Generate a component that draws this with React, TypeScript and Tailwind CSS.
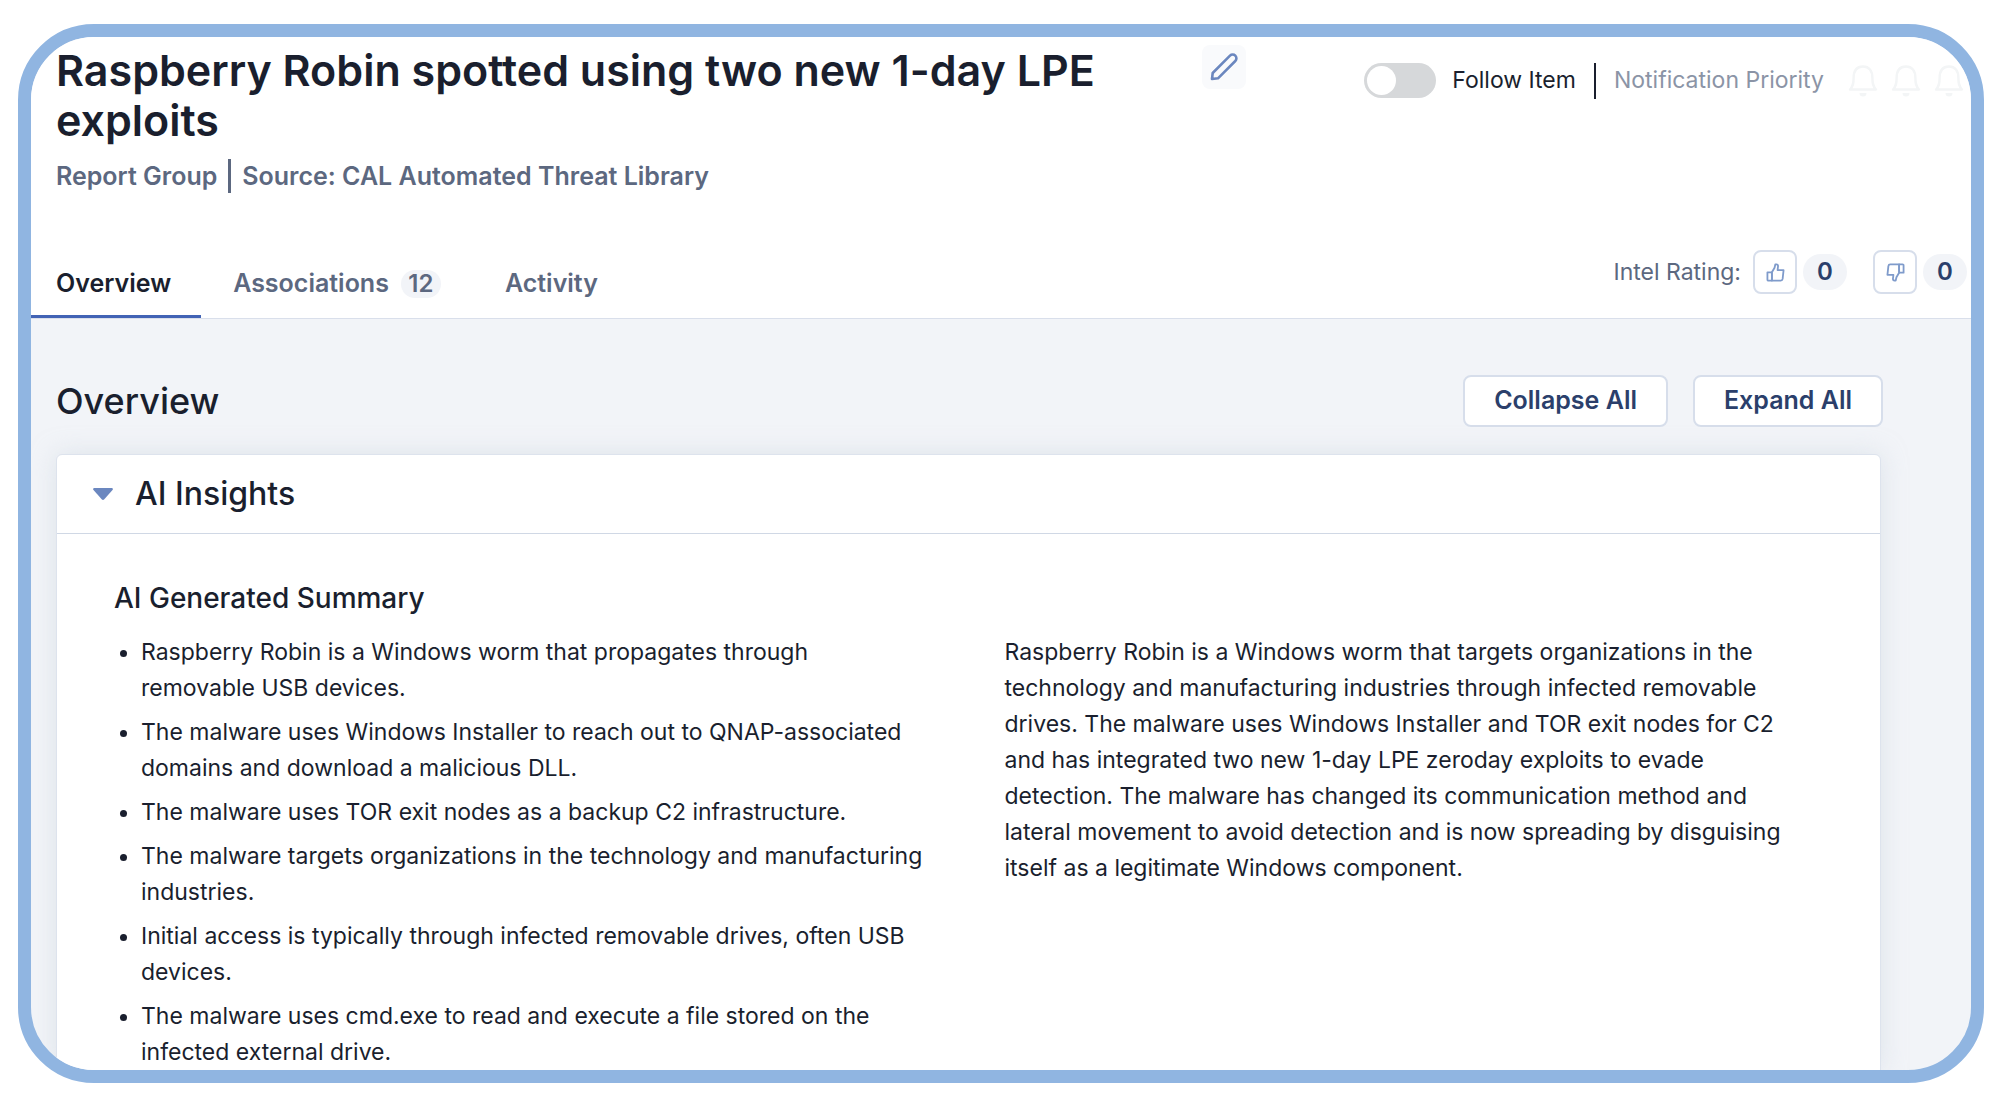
import { useState } from "react";

const TABS = [
  { id: "overview", label: "Overview" },
  { id: "associations", label: "Associations", count: 12 },
  { id: "activity", label: "Activity" },
];

const SUMMARY_POINTS = [
  "Raspberry Robin is a Windows worm that propagates through removable USB devices.",
  "The malware uses Windows Installer to reach out to QNAP-associated domains and download a malicious DLL.",
  "The malware uses TOR exit nodes as a backup C2 infrastructure.",
  "The malware targets organizations in the technology and manufacturing industries.",
  "Initial access is typically through infected removable drives, often USB devices.",
  "The malware uses cmd.exe to read and execute a file stored on the infected external drive.",
];

const PRIORITIES = ["Low", "Medium", "High"];

const PencilIcon = () => (
  <svg
    className="size-8"
    fill="none"
    stroke="currentColor"
    strokeLinejoin="round"
    strokeWidth="2.6"
    viewBox="0 0 32 32"
  >
    <path d="M4 28l.7-6L22 4.700a3.700 3.700 0 0 1 5.300 5.300L10 27.300z" />
  </svg>
);

const BellIcon = () => (
  <svg className="h-[34px] w-[30px]" fill="none" viewBox="0 0 30 34">
    <path
      d="M2 25.500c3.200-3.400 3.600-6 3.600-11.500C5.600 6.500 9 2.500 15 2.500S24.400 6.500 24.400 14c0 5.500.4 8.100 3.600 11.500z"
      stroke="currentColor"
      strokeLinejoin="round"
      strokeWidth="2.4"
    />
    <path d="M11.500 29h7a3.500 3.500 0 0 1-7 0z" fill="currentColor" />
  </svg>
);

const ThumbIcon = ({ down = false }: { down?: boolean }) => (
  <svg
    className={down ? "size-[19px] rotate-180" : "size-[19px]"}
    fill="none"
    stroke="currentColor"
    strokeLinejoin="round"
    strokeWidth="1.900"
    viewBox="0 0 20 20"
  >
    <path d="M1.500 9.800h4.700v8.700H2.500a1 1 0 0 1-1-1z" />
    <path d="M6.200 9.800l2.800-4.800.8-3.500h1.200c1 0 1.700.8 1.700 1.800l-.5 4.300h6.300l-1 9.200a2 2 0 0 1-2 1.700H6.200z" />
  </svg>
);

const RatingButton = ({
  label,
  count,
  down,
}: {
  label: string;
  count: number;
  down?: boolean;
}) => (
  <div className="flex items-center gap-1.5">
    <button
      aria-label={label}
      className="flex size-11 items-center justify-center rounded-lg border-2 border-[#d7deeb] bg-white text-[#7f9bcb]"
      type="button"
    >
      <ThumbIcon down={down} />
    </button>
    <span className="flex h-9 w-11 items-center justify-center rounded-full bg-[#f2f4f8] font-semibold text-[#2b3f6b] text-[24px]">
      {count}
    </span>
  </div>
);

export default function App() {
  const [tab, setTab] = useState("overview");
  const [open, setOpen] = useState(true);

  return (
    <div className="h-screen bg-white pt-6 pr-4 pb-[23px] pl-[18px] font-[Inter,sans-serif] text-[#1a1f2e]">
      <div className="flex h-full flex-col overflow-hidden rounded-[76px] border-[#90b5e1] border-[13px] bg-[#f2f4f8]">
        <header className="shrink-0 border-[#d9dfeb] border-b bg-white">
          <div className="flex items-start pt-2 pr-[7px] pl-[25px]">
            <div className="flex-1">
              <h1 className="font-semibold text-[43px] leading-[50px]">
                Raspberry Robin spotted using two new 1-day LPE exploits
              </h1>
              <p className="mt-2 flex items-center gap-[11px] font-semibold text-[#5c6880] text-[25px] leading-[46px]">
                <span>Report Group</span>
                <span className="h-[34px] w-[3px] bg-[#5c6880]" />
                <span>Source: CAL Automated Threat Library</span>
              </p>
            </div>
            <button
              aria-label="Edit title"
              className="flex size-11 items-center justify-center rounded-lg bg-[#f9fafc] text-[#6b87bf]"
              type="button"
            >
              <PencilIcon />
            </button>
            <div className="ml-[118px] flex h-[71px] items-center text-[23px]">
              <label className="flex items-center gap-4">
                <input
                  className="flex h-[35px] w-[72px] appearance-none items-center rounded-full bg-[#d6d8da] px-[3px] before:size-[29px] before:rounded-full before:bg-white checked:justify-end checked:bg-[#4263b5]"
                  type="checkbox"
                />
                Follow Item
              </label>
              <span className="mx-[18px] h-9 w-[2px] bg-[#1a1f2e]" />
              <span className="text-[#8b94a6]">Notification Priority</span>
              <div className="ml-6 flex gap-[13px]">
                {PRIORITIES.map((p) => (
                  <button
                    aria-label={p}
                    className="text-[#f3f5f6]"
                    key={p}
                    type="button"
                  >
                    <BellIcon />
                  </button>
                ))}
              </div>
            </div>
          </div>

          <div className="mt-[35px] flex items-start justify-between pr-1">
            <nav className="flex">
              {TABS.map((t) => (
                <button
                  className={
                    t.id === tab
                      ? "flex h-[84px] items-center gap-3 border-[#4263b5] border-b-[3px] pt-[18px] pr-[30px] pl-[25px] font-semibold text-[25px]"
                      : "flex h-[84px] items-center gap-3 border-transparent border-b-[3px] px-8 pt-[18px] font-semibold text-[#5c6880] text-[25px]"
                  }
                  key={t.id}
                  onClick={() => setTab(t.id)}
                  type="button"
                >
                  {t.label}
                  {t.count && (
                    <span className="flex h-7 w-10 items-center justify-center rounded-full bg-[#f2f4f8] text-[24px]">
                      {t.count}
                    </span>
                  )}
                </button>
              ))}
            </nav>
            <div className="flex items-center gap-[26px] pt-4">
              <div className="flex items-center gap-3">
                <span className="text-[#5c6880] text-[23px]">
                  Intel Rating:
                </span>
                <RatingButton count={0} label="Thumbs up" />
              </div>
              <RatingButton count={0} down label="Thumbs down" />
            </div>
          </div>
        </header>

        <main className="flex min-h-0 flex-1 flex-col pt-14 pr-[88px] pl-[25px]">
          <div className="flex items-center justify-between">
            <h2 className="font-medium text-[36px] leading-[52px]">Overview</h2>
            <div className="flex gap-[25px]">
              <button
                className="h-[52px] rounded-lg border-2 border-[#d7deeb] bg-white px-[29px] font-semibold text-[#2b3f6b] text-[25px]"
                onClick={() => setOpen(false)}
                type="button"
              >
                Collapse All
              </button>
              <button
                className="h-[52px] rounded-lg border-2 border-[#d7deeb] bg-white px-[29px] font-semibold text-[#2b3f6b] text-[25px]"
                onClick={() => setOpen(true)}
                type="button"
              >
                Expand All
              </button>
            </div>
          </div>

          <section className="mt-[27px] mr-0.5 flex-1 rounded-t-md border border-[#dde3ed] bg-white shadow-[0_0_24px_rgba(200,212,222,0.5)]">
            <button
              aria-expanded={open}
              className="flex h-[79px] w-full items-center gap-[22px] border-[#d0d8e5] border-b pl-9 text-left font-medium text-[32px]"
              onClick={() => setOpen(!open)}
              type="button"
            >
              <svg className="h-3 w-5" fill="#6b87bf" viewBox="0 0 20 12">
                <path d="M1.500 0h17c1.200 0 1.800 1.200 1 2.100l-8.200 9.200a1.800 1.800 0 0 1-2.600 0L.5 2.100C-.3 1.200.3 0 1.500 0z" />
              </svg>
              AI Insights
            </button>
            {open && (
              <div className="px-[57px] pt-[42px]">
                <h3 className="font-medium text-[28px] leading-[44px]">
                  AI Generated Summary
                </h3>
                <div className="mt-3.5 grid grid-cols-2 gap-[72px] text-[23px] leading-9">
                  <ul className="flex list-disc flex-col gap-2 pr-1.5 pl-[27px]">
                    {SUMMARY_POINTS.map((point) => (
                      <li key={point}>{point}</li>
                    ))}
                  </ul>
                  <p className="pr-4">
                    Raspberry Robin is a Windows worm that targets organizations
                    in the technology and manufacturing industries through
                    infected removable drives. The malware uses Windows
                    Installer and TOR exit nodes for C2 and has integrated two
                    new 1-day LPE zeroday exploits to evade detection. The
                    malware has changed its communication method and lateral
                    movement to avoid detection and is now spreading by
                    disguising itself as a legitimate Windows component.
                  </p>
                </div>
              </div>
            )}
          </section>
        </main>
      </div>
    </div>
  );
}
